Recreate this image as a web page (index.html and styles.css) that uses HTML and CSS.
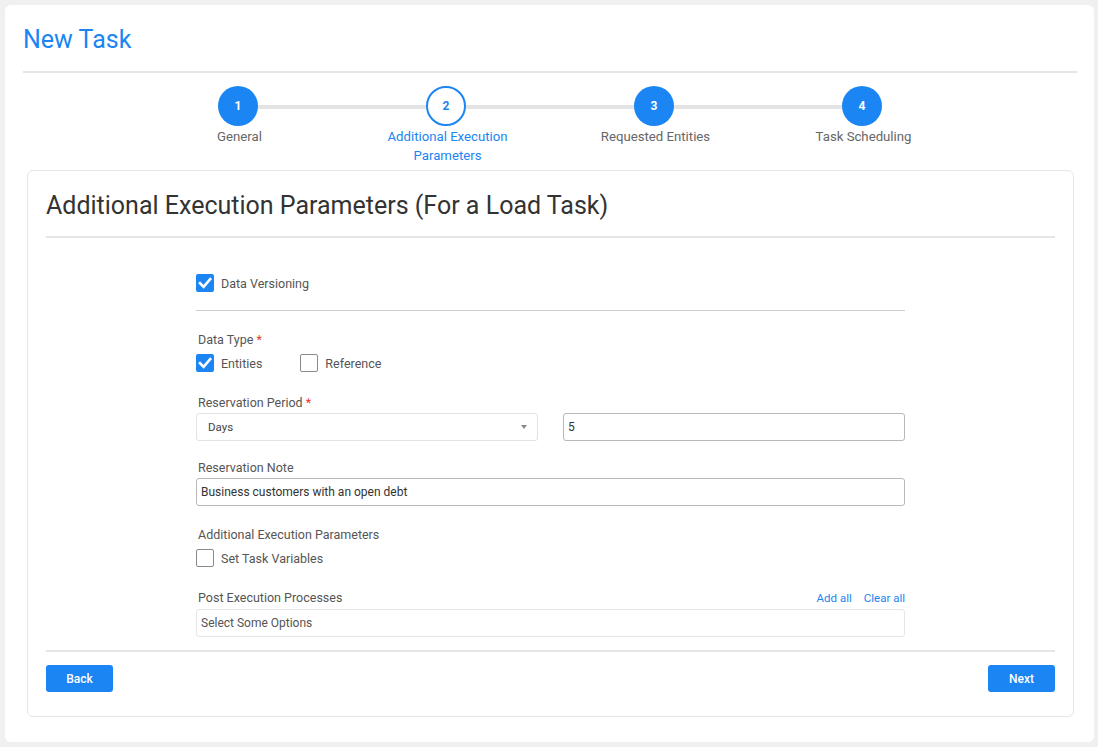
FILE: index.html
```html
<!DOCTYPE html>
<html>
<head>
<meta charset="utf-8">
<link rel="stylesheet" href="styles.css">
</head>
<body>
<div class="page">
  <h1 class="title">New Task</h1>
  <div class="rule"></div>
  <div class="stepper">
    <div class="step done"><div class="circle">1</div><div class="step-label">General</div></div>
    <div class="step current"><div class="circle">2</div><div class="step-label">Additional Execution Parameters</div></div>
    <div class="step done"><div class="circle">3</div><div class="step-label">Requested Entities</div></div>
    <div class="step done"><div class="circle">4</div><div class="step-label">Task Scheduling</div></div>
  </div>
  <div class="card">
    <h2 class="card-title">Additional Execution Parameters (For a Load Task)</h2>
    <div class="card-rule"></div>
    <div class="form">
      <div class="check-row first">
        <label class="check"><span class="box checked"><svg viewBox="0 0 18 18" width="18" height="18"><path d="M4 9.2 L7.6 12.8 L14.2 5.2" fill="none" stroke="#fff" stroke-width="2.6" stroke-linecap="square"/></svg></span>Data Versioning</label>
      </div>
      <div class="sep"></div>
      <div class="group g-type">
        <div class="label">Data Type <span class="req">*</span></div>
        <div class="check-row">
          <label class="check"><span class="box checked"><svg viewBox="0 0 18 18" width="18" height="18"><path d="M4 9.2 L7.6 12.8 L14.2 5.2" fill="none" stroke="#fff" stroke-width="2.6" stroke-linecap="square"/></svg></span>Entities</label>
          <label class="check ref"><span class="box"></span>Reference</label>
        </div>
      </div>
      <div class="group">
        <div class="label">Reservation Period <span class="req">*</span></div>
        <div class="two">
          <div class="select"><span>Days</span><span class="arrow"></span></div>
          <div class="input">5</div>
        </div>
      </div>
      <div class="group g-note">
        <div class="label">Reservation Note</div>
        <div class="input">Business customers with an open debt</div>
      </div>
      <div class="group g-add">
        <div class="label">Additional Execution Parameters</div>
        <div class="check-row">
          <label class="check"><span class="box"></span>Set Task Variables</label>
        </div>
      </div>
      <div class="group g-post">
        <div class="label-row">
          <div class="label">Post Execution Processes</div>
          <div class="links"><a>Add all</a><a>Clear all</a></div>
        </div>
        <div class="multi">Select Some Options</div>
      </div>
    </div>
    <div class="card-rule bottom"></div>
    <div class="actions">
      <button class="btn">Back</button>
      <button class="btn">Next</button>
    </div>
  </div>
</div>
</body>
</html>
```

FILE: styles.css
```css
* { box-sizing: border-box; }
html, body { margin: 0; padding: 0; }
body {
  background: #f0f0f0;
  font-family: Roboto, "Liberation Sans", Arial, sans-serif;
  padding: 5px 4px 5px 5px;
  height: 747px;
}
.page {
  background: #fff;
  border-radius: 6px;
  height: 737px;
  padding: 21px 17px 0 18px;
}
.title {
  margin: 0;
  font-size: 25px;
  font-weight: 400;
  line-height: 28px;
  color: #1a85f3;
}
.rule {
  height: 2px;
  background: #e6e6e6;
  margin-top: 17px;
}
.stepper {
  position: relative;
  display: flex;
  justify-content: center;
  margin-top: 13px;
  height: 84px;
}
.stepper::before {
  content: "";
  position: absolute;
  top: 19px;
  left: 50%;
  width: 624px;
  margin-left: -312px;
  height: 4px;
  background: #e3e3e3;
}
.step {
  width: 208px;
  display: flex;
  flex-direction: column;
  align-items: center;
  position: relative;
}
.circle {
  width: 40px;
  height: 40px;
  border-radius: 50%;
  background: #1a85f3;
  color: #fff;
  font-size: 12px;
  font-weight: 700;
  display: flex;
  align-items: center;
  justify-content: center;
}
.step.current .circle {
  background: #fff;
  border: 2px solid #1a85f3;
  color: #1a85f3;
}
.step-label {
  font-size: 13.2px;
  line-height: 19px;
  color: #666;
  text-align: center;
  max-width: 140px;
  margin-top: 1px;
  padding-left: 3px;
}
.step.current .step-label { color: #1a85f3; }
.card {
  margin: 0 3px 0 4px;
  border: 1px solid #e6e6e6;
  border-radius: 6px;
  padding: 21px 18px 24px 18px;
}
.card-title {
  margin: 0;
  font-size: 25px;
  font-weight: 400;
  line-height: 28px;
  color: #333;
}
.card-rule {
  height: 2px;
  background: #e6e6e6;
  margin-top: 16px;
}
.card-rule.bottom { margin-top: 13px; }
.form {
  width: 709px;
  margin: 0 auto;
  padding-top: 36px;
}
.check-row {
  display: flex;
  align-items: center;
  height: 18px;
}
.check {
  display: flex;
  align-items: center;
  font-size: 12.5px;
  color: #555;
}
.check.ref { margin-left: 38px; }
.box {
  width: 18px;
  height: 18px;
  border: 1px solid #8a8a8a;
  border-radius: 2px;
  background: #fff;
  margin-right: 7px;
  display: block;
}
.box.checked {
  border: none;
  background: #1a85f3;
}
.box svg { display: block; }
.sep {
  height: 1px;
  background: #cfcfcf;
  margin-top: 18px;
}
.group { margin-top: 22px; }
.g-type { margin-top: 20px; }
.g-note { margin-top: 18px; }
.g-add { margin-top: 20px; }
.label {
  font-size: 12.5px;
  line-height: 16px;
  color: #555;
  padding-left: 2px;
  padding-top: 1px;
  margin-bottom: 2px;
}
.group .check-row { margin-top: 6px; }
.g-type .label, .g-add .label { margin-bottom: 0; }
.req { color: #e53935; }
.two {
  display: flex;
  justify-content: space-between;
}
.select {
  width: 342px;
  height: 28px;
  border: 1px solid #e3e3e3;
  border-radius: 3px;
  display: flex;
  align-items: center;
  justify-content: space-between;
  padding: 0 10px 0 11px;
  font-size: 11.5px;
  color: #444;
}
.arrow {
  width: 0;
  height: 0;
  border-left: 3px solid transparent;
  border-right: 3px solid transparent;
  border-top: 4px solid #888;
}
.input {
  height: 28px;
  border: 1px solid #b8b8b8;
  border-radius: 3px;
  padding: 0 4px;
  display: flex;
  align-items: center;
  font-size: 12px;
  color: #333;
}
.two .input { width: 342px; }
.label-row {
  display: flex;
  justify-content: space-between;
  align-items: flex-end;
  margin-bottom: 3px;
}
.label-row .label { margin-bottom: 0; }
.links { display: flex; gap: 12px; font-size: 11.5px; line-height: 16px; color: #1a85f3; }
.multi {
  height: 28px;
  border: 1px solid #e6e6e6;
  border-radius: 3px;
  padding: 0 4px;
  display: flex;
  align-items: center;
  font-size: 12px;
  color: #555;
}
.actions {
  display: flex;
  justify-content: space-between;
  margin-top: 13px;
}
.btn {
  width: 67px;
  height: 27px;
  border: none;
  border-radius: 3px;
  background: #1a85f3;
  color: #fff;
  font-family: Roboto, "Liberation Sans", Arial, sans-serif;
  font-size: 12px;
  font-weight: 500;
  padding: 0;
}
```
